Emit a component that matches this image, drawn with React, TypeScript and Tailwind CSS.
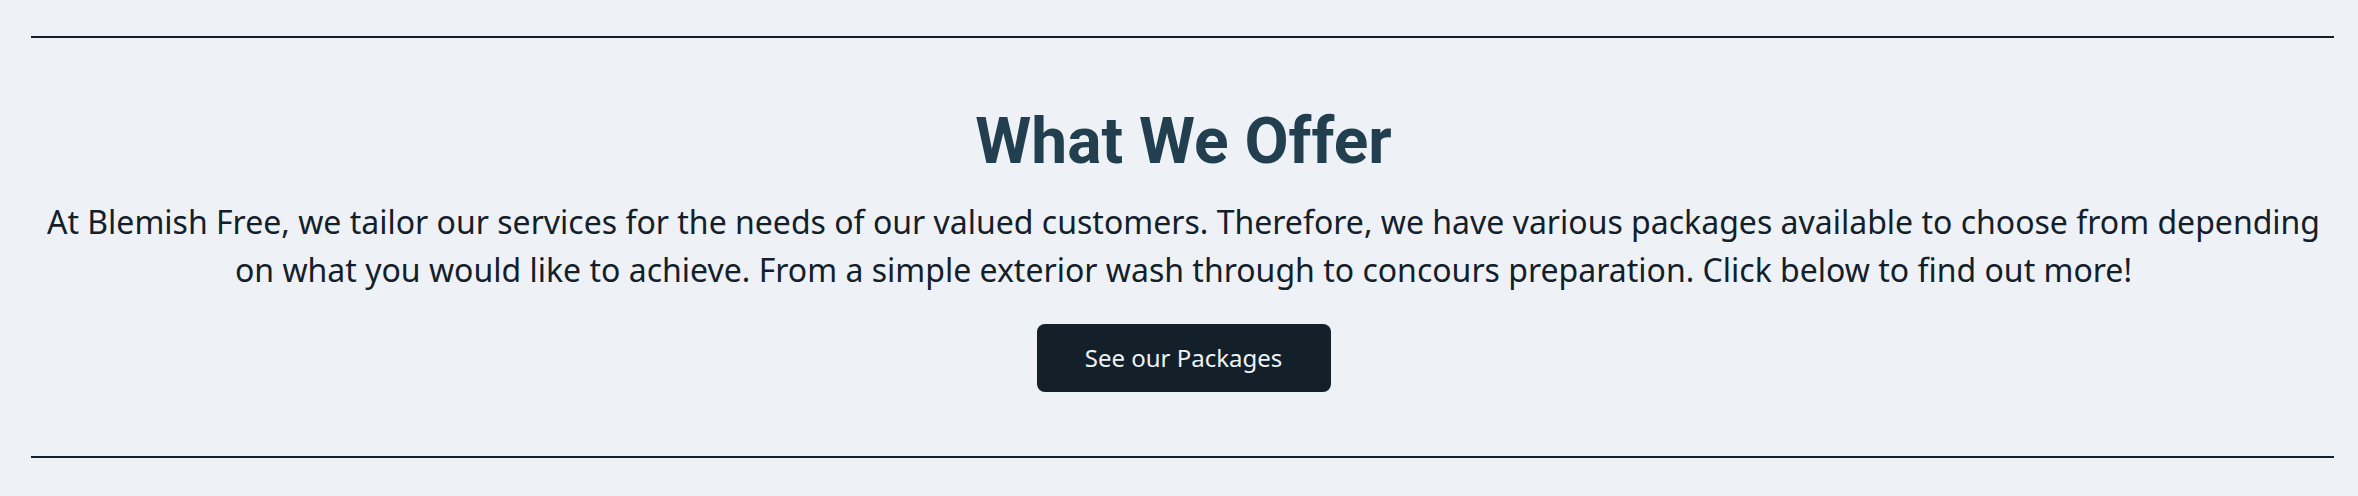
export default function App() {
  return (
    <div className="min-h-[496px] w-full bg-[#eef2f7] pt-[36px] font-['Noto_Sans',sans-serif]">
      <hr className="ml-[31px] mr-[24px] border-0 border-t-2 border-[#13202a]" />
      <section className="flex flex-col items-center pl-[36px] pr-[27px] pt-[66px] pb-[64px] text-center">
        <h2 className="font-['Roboto',sans-serif] text-[64px] leading-[76px] font-bold text-[#223f4f]">
          What We Offer
        </h2>
        <p className="mt-[18px] text-[32px] leading-[48px] text-[#13202a]">
          At Blemish Free, we tailor our services for the needs of our valued customers. Therefore, we have various
          packages available to choose from depending on what you would like to achieve. From a simple exterior wash
          through to concours preparation. Click below to find out more!
        </p>
        <a
          href="#packages"
          className="mt-[30px] flex h-[68px] w-[294px] items-center justify-center rounded-lg bg-[#13202a] text-[24px] text-[#eef2f7]"
        >
          See our Packages
        </a>
      </section>
      <hr className="ml-[31px] mr-[24px] border-0 border-t-2 border-[#13202a]" />
    </div>
  );
}
